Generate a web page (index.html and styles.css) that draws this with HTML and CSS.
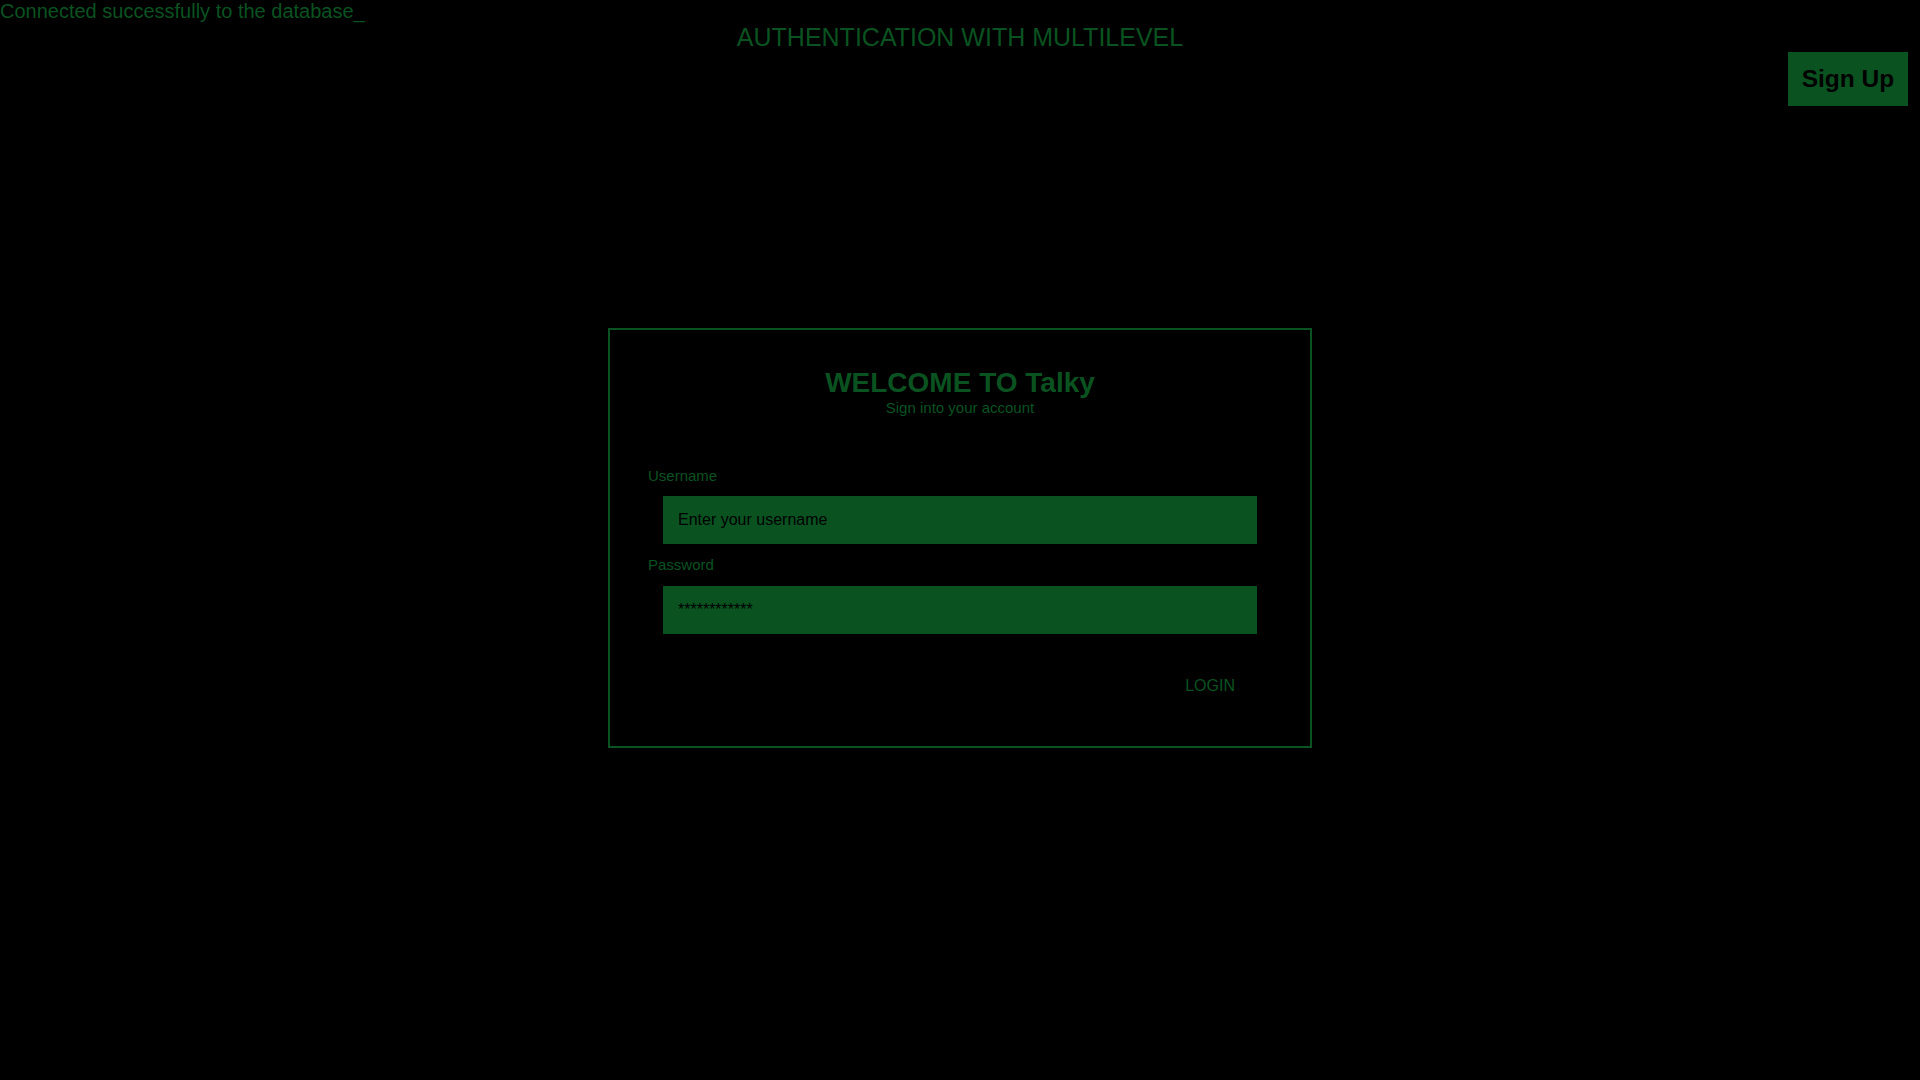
FILE: index.html
```html
<!DOCTYPE html>
<html>
<head>
<meta charset="utf-8">
<title>Talky</title>
<link rel="stylesheet" href="styles.css">
</head>
<body>
<div class="status">Connected successfully to the database_</div>
<h1 class="heading">AUTHENTICATION WITH MULTILEVEL</h1>
<div class="nav">
  <button class="signup">Sign Up</button>
</div>
<main class="stage">
  <form class="card">
    <h2 class="card-title">WELCOME TO Talky</h2>
    <p class="card-sub">Sign into your account</p>
    <label class="field-label">Username</label>
    <input class="field" type="text" placeholder="Enter your username">
    <label class="field-label field-label-pass">Password</label>
    <input class="field field-pass" type="text" placeholder="************">
    <div class="actions">
      <button type="button" class="login">LOGIN</button>
    </div>
  </form>
</main>
</body>
</html>
```

FILE: styles.css
```css
html, body {
  margin: 0;
  padding: 0;
  background: #000;
  height: 100%;
}
body {
  font-family: "Liberation Sans", Arial, sans-serif;
  color: #0a5320;
}
.status {
  font-size: 20px;
  line-height: 23px;
}
.heading {
  margin: 0;
  font-size: 25px;
  font-weight: normal;
  text-align: center;
  line-height: 28px;
}
.nav {
  display: flex;
  justify-content: flex-end;
  padding-right: 12px;
  margin-top: 1px;
}
.signup {
  width: 120px;
  height: 54px;
  background: #0a5320;
  color: #000;
  border: none;
  font-family: "Liberation Sans", Arial, sans-serif;
  font-weight: bold;
  font-size: 24.5px;
  padding: 0;
}
.stage {
  display: flex;
  justify-content: center;
  padding-top: 222px;
}
.card {
  box-sizing: border-box;
  width: 704px;
  height: 420px;
  border: 2px solid #0a5320;
  display: flex;
  flex-direction: column;
  padding-top: 37px;
}
.card-title {
  margin: 0;
  text-align: center;
  font-size: 28px;
  font-weight: bold;
  line-height: 32px;
}
.card-sub {
  margin: 0;
  text-align: center;
  font-size: 15px;
  line-height: 17px;
}
.field-label {
  display: block;
  font-size: 15px;
  line-height: 17px;
  margin-left: 38px;
  margin-top: 51px;
}
.field-label-pass { margin-top: 12px; }
.field {
  align-self: center;
  width: 594px;
  height: 48px;
  margin-top: 12px;
  box-sizing: border-box;
  border: none;
  outline: none;
  background: #0a5320;
  padding: 0 15px;
  font-family: "Liberation Sans", Arial, sans-serif;
  font-size: 16px;
  color: #000;
}
.field-pass { margin-top: 13px; }
.field::placeholder {
  color: #000;
  opacity: 1;
}
.actions {
  display: flex;
  justify-content: flex-end;
  margin-top: 43px;
  padding-right: 75px;
}
.login {
  background: transparent;
  border: none;
  padding: 0;
  font-family: "Liberation Sans", Arial, sans-serif;
  font-size: 16px;
  line-height: 18px;
  color: #0a5320;
}
```
